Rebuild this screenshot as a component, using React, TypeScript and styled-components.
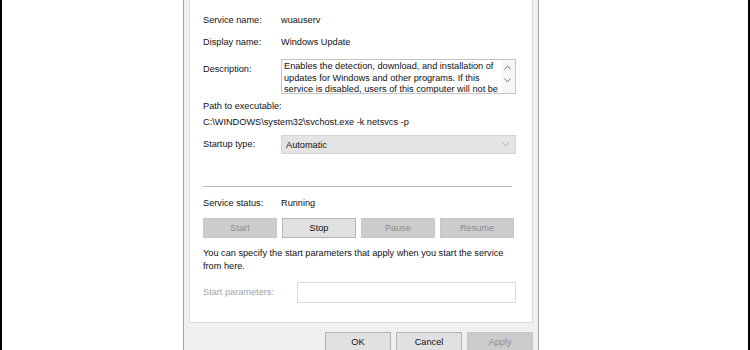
import React from "react";
import styled, { createGlobalStyle } from "styled-components";

const GlobalStyle = createGlobalStyle`
  html, body {
    margin: 0;
    padding: 0;
    background: #ffffff;
  }
  body {
    font-family: "Liberation Sans", Arial, sans-serif;
  }
`;

const Frame = styled.div`
  box-sizing: border-box;
  width: 750px;
  height: 350px;
  overflow: hidden;
  display: flex;
  align-items: flex-start;
  background: #ffffff;
  border-left: 2px solid #000000;
  border-right: 2px solid #000000;
`;

const Dialog = styled.div`
  box-sizing: border-box;
  margin-left: 181px;
  width: 356px;
  height: 360px;
  display: flex;
  flex-direction: column;
  padding: 0 5px;
  background: #f0f0f0;
  border-left: 1px solid #a3a3a3;
  border-right: 1px solid #a3a3a3;
  font-size: 9.2px;
  color: #111111;
`;

const Panel = styled.div`
  box-sizing: border-box;
  height: 323px;
  display: flex;
  flex-direction: column;
  padding: 14px 16px 0 13px;
  background: #ffffff;
  border: 1px solid #dadada;
  border-top: none;
`;

const Row = styled.div<{ $top?: number; $align?: string }>`
  display: flex;
  align-items: ${(p) => p.$align ?? "center"};
  margin-top: ${(p) => p.$top ?? 0}px;
`;

const Label = styled.div<{ $disabled?: boolean; $width?: number; $top?: number }>`
  flex: none;
  width: ${(p) => p.$width ?? 78}px;
  margin-top: ${(p) => p.$top ?? 0}px;
  line-height: 13px;
  white-space: nowrap;
  color: ${(p) => (p.$disabled ? "#a2a2a2" : "inherit")};
`;

const Value = styled.div`
  line-height: 13px;
`;

const DescBox = styled.div`
  box-sizing: border-box;
  flex: 1;
  height: 35px;
  display: flex;
  border: 1px solid #c4c4c4;
  overflow: hidden;
`;

const DescText = styled.div`
  flex: 1;
  padding: 1px 0 0 2px;
  line-height: 11.5px;
  overflow: hidden;
`;

const ScrollBar = styled.div`
  flex: none;
  width: 13px;
  display: flex;
  flex-direction: column;
  align-items: center;
  gap: 8px;
  padding: 5px 2px 0 0;
  box-sizing: border-box;
  background: #f7f7f7;
`;

const Text = styled.div<{ $top?: number }>`
  line-height: 13px;
  margin-top: ${(p) => p.$top ?? 0}px;
`;

const Combo = styled.div`
  box-sizing: border-box;
  flex: 1;
  height: 19px;
  display: flex;
  align-items: center;
  justify-content: space-between;
  padding: 0 6px 0 4px;
  background: #e4e4e4;
  border: 1px solid #d4d4d4;
`;

const Separator = styled.div`
  height: 1px;
  margin: 32px 4px 0 0;
  background: #b9b9b9;
`;

const ButtonRow = styled.div<{ $top?: number }>`
  display: flex;
  gap: 5px;
  margin-top: ${(p) => p.$top ?? 0}px;
`;

const Button = styled.div<{ $disabled?: boolean; $width?: number }>`
  box-sizing: border-box;
  width: ${(p) => p.$width ?? 74}px;
  height: 20px;
  display: flex;
  align-items: center;
  justify-content: center;
  background: ${(p) => (p.$disabled ? "#cccccc" : "#e1e1e1")};
  border: 1px solid ${(p) => (p.$disabled ? "#c6c6c6" : "#b4b4b4")};
  color: ${(p) => (p.$disabled ? "#8e8e8e" : "#111111")};
`;

const Input = styled.div`
  box-sizing: border-box;
  flex: 1;
  height: 21px;
  margin-left: 16px;
  background: #ffffff;
  border: 1px solid #dcdcdc;
`;

const Footer = styled.div`
  display: flex;
  justify-content: flex-end;
  gap: 5px;
  padding: 9px 0 0 0;
`;

const Chevron: React.FC<{ up?: boolean; color?: string }> = ({ up, color }) => (
  <svg width="7" height="5" viewBox="0 0 7 5">
    <path
      d={up ? "M0.5 4.5 L3.5 1 L6.5 4.5" : "M0.5 0.5 L3.5 4 L6.5 0.5"}
      fill="none"
      stroke={color ?? "#7a7a7a"}
      strokeWidth="1"
    />
  </svg>
);

const App: React.FC = () => {
  return (
    <>
      <GlobalStyle />
      <Frame>
        <Dialog>
          <Panel>
            <Row>
              <Label>Service name:</Label>
              <Value>wuauserv</Value>
            </Row>
            <Row $top={9}>
              <Label>Display name:</Label>
              <Value>Windows Update</Value>
            </Row>
            <Row $top={10} $align="flex-start">
              <Label $top={4}>Description:</Label>
              <DescBox>
                <DescText>
                  Enables the detection, download, and installation of
                  updates for Windows and other programs. If this service is
                  disabled, users of this computer will not be able to use
                  Windows Update or its automatic updating feature.
                </DescText>
                <ScrollBar>
                  <Chevron up />
                  <Chevron />
                </ScrollBar>
              </DescBox>
            </Row>
            <Text $top={6}>Path to executable:</Text>
            <Text $top={3}>C:\WINDOWS\system32\svchost.exe -k netsvcs -p</Text>
            <Row $top={6}>
              <Label>Startup type:</Label>
              <Combo>
                <span>Automatic</span>
                <Chevron color="#b0b0b0" />
              </Combo>
            </Row>
            <Separator />
            <Row $top={10}>
              <Label>Service status:</Label>
              <Value>Running</Value>
            </Row>
            <ButtonRow $top={8}>
              <Button $disabled>Start</Button>
              <Button>Stop</Button>
              <Button $disabled>Pause</Button>
              <Button $disabled>Resume</Button>
            </ButtonRow>
            <Text $top={9}>
              You can specify the start parameters that apply when you start
              the service
              <br />
              from here.
            </Text>
            <Row $top={9}>
              <Label $disabled $width={78}>
                Start parameters:
              </Label>
              <Input />
            </Row>
          </Panel>
          <Footer>
            <Button $width={66}>OK</Button>
            <Button $width={66}>Cancel</Button>
            <Button $width={66} $disabled>
              Apply
            </Button>
          </Footer>
        </Dialog>
      </Frame>
    </>
  );
};

export default App;
